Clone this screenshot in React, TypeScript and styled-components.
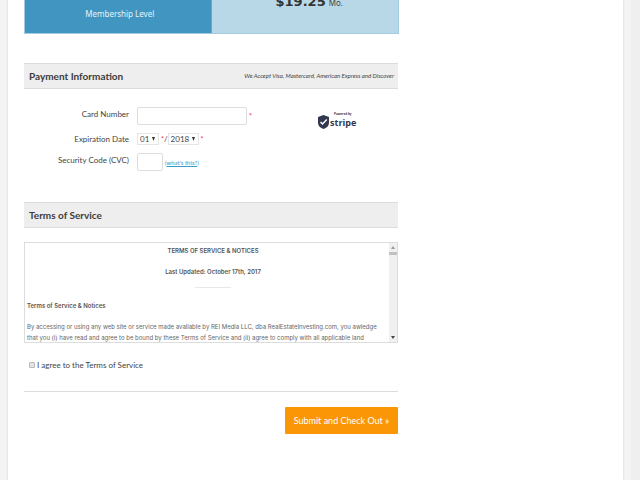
import React from "react";
import styled, { createGlobalStyle } from "styled-components";

const GlobalStyle = createGlobalStyle`
  * { box-sizing: border-box; }
  html { background: #f4f4f4; }
  body {
    margin: 0;
    font-family: Lato, "Liberation Sans", sans-serif;
    font-size: 8px;
    color: #444;
  }
`;

const Page = styled.div`
  display: flex;
  min-height: 100vh;
  padding-left: 8px;
`;

const Sheet = styled.main`
  flex: 1;
  padding: 0 16px 46px;
  background: #fff;
  box-shadow: 0 0 2px #ccc;
`;

const PageTrack = styled.div`
  width: 9px;
  margin-left: 8px;
  background: #efefef;
`;

const Form = styled.form`
  width: 65%;
  max-width: 374px;
`;

const Summary = styled.div`
  display: grid;
  grid-template-columns: 1fr 1fr;
  height: 34px;
  margin-right: -1px;
  border: 1px solid #a3cce0;
  border-top: 0;
  overflow: hidden;
`;

const Level = styled.div`
  padding: 8px 0 0 4px;
  border-right: 1px solid #66a9cb;
  background: #4196c1;
  color: #e6f2f8;
  font: 8px/12px "Noto Sans", sans-serif;
  text-align: center;
`;

const Price = styled.div`
  display: flex;
  align-items: baseline;
  justify-content: center;
  gap: 3px;
  margin-top: -8px;
  padding-left: 9px;
  background: #b8d8e7;
  color: #444;
  font: 8px/20px "Noto Sans", sans-serif;

  strong {
    color: #333;
    font: 700 13px/20px "DejaVu Sans", sans-serif;
  }
`;

const SectionHeader = styled.header<{ $gap: number }>`
  display: flex;
  align-items: center;
  justify-content: space-between;
  height: 26px;
  margin-top: ${(p) => p.$gap}px;
  padding: 0 4px 0 5px;
  border: 1px solid #dcdcdc;
  border-width: 1px 0;
  background: #eee;

  h2 {
    margin: 0;
    font-size: 10px;
    line-height: 14px;
    color: #3c3c3c;
  }

  em {
    font-size: 6px;
    line-height: 8px;
  }
`;

const Payment = styled.div`
  display: grid;
  grid-template-columns: 1fr 80px;
  height: 64px;
  margin-top: 17px;
`;

const Fields = styled.div`
  display: flex;
  flex-direction: column;
`;

const Field = styled.div<{ $height: number }>`
  display: flex;
  align-items: flex-start;
  height: ${(p) => p.$height}px;
`;

const Label = styled.label`
  width: 105px;
  margin-right: 8px;
  padding-top: 3px;
  font-size: 8px;
  line-height: 10px;
  text-align: right;
`;

const TextInput = styled.input<{ $width: number }>`
  width: ${(p) => p.$width}px;
  height: 18px;
  margin: 1px 0 0;
  padding: 2px;
  border: 1px solid #ddd;
  border-radius: 2px;
  font: 8px Lato, sans-serif;
`;

const Select = styled.select<{ $width: number }>`
  width: ${(p) => p.$width}px;
  height: 12px;
  padding: 0 2px;
  border: 1px solid #e5e5e5;
  border-radius: 0;
  appearance: none;
  background: #fff;
  color: #444;
  font: 8px/10px Lato, sans-serif;
`;

const SelectBox = styled.span`
  display: inline-grid;
  align-items: center;

  > * { grid-area: 1 / 1; }
  svg {
    justify-self: end;
    width: 3px;
    height: 4px;
    margin-right: 4px;
    pointer-events: none;
  }
`;

const Required = styled.span`
  margin-left: 2px;
  color: #e33;
  font-size: 7px;
  line-height: 12px;
`;

const CardRequired = styled(Required)`
  line-height: 20px;
`;

const DateParts = styled.div`
  display: flex;
  margin-top: 2px;
  font-size: 8px;
  line-height: 12px;
`;

const Help = styled.span`
  margin: 7px 0 0 2px;
  font-size: 6px;
  line-height: 8px;
  color: #3a9bc8;

  a { color: inherit; }
`;

const Stripe = styled.div`
  display: flex;
  align-items: flex-end;
  gap: 1px;
  height: 23px;
  color: #32384e;

  svg { width: 11px; height: 14px; }
`;

const StripeName = styled.div`
  display: flex;
  flex-direction: column;
  font-family: "Open Sans", sans-serif;

  small {
    padding-left: 4px;
    font-size: 3px;
    line-height: 4px;
    font-weight: 700;
  }
  strong {
    font-size: 9px;
    line-height: 13px;
  }
`;

const TermsBox = styled.div`
  display: flex;
  height: 101px;
  margin-top: 14px;
  border: 1px solid #ddd;
`;

const TermsText = styled.div`
  flex: 1;
  padding: 2px 2px 0;
  overflow: hidden;
  color: #666;
  font: 6px/11px Inter, Roboto, sans-serif;

  p { margin: 0 0 10px; white-space: nowrap; }
`;

const TermsTitle = styled.div`
  padding-left: 12px;
  text-align: center;

  hr {
    width: 36px;
    margin: 0 auto 12px;
    border: 0;
    border-top: 1px solid #e8e8e8;
  }
`;

const Heading = styled.p`
  font-weight: 600;
  color: #555;
`;

const Track = styled.div`
  display: flex;
  flex-direction: column;
  align-items: center;
  width: 8px;
  background: #f0f0f0;

  svg { width: 4px; height: 3px; margin: 3px 0; }
`;

const Thumb = styled.div`
  width: 8px;
  height: 3px;
  margin-bottom: auto;
  background: #c1c1c1;
`;

const Agree = styled.label`
  display: flex;
  align-items: center;
  gap: 2px;
  margin-top: 17px;
  padding-left: 5px;
  font-size: 8px;
  line-height: 10px;

  input {
    appearance: none;
    width: 6px;
    height: 6px;
    margin: 0;
    border: 1px solid #b8b8b8;
    border-radius: 1px;
    background: #e4e4e4;
  }
`;

const Actions = styled.div`
  display: flex;
  justify-content: flex-end;
  margin-top: 21px;
  padding-top: 15px;
  border-top: 1px solid #ddd;
`;

const Submit = styled.button`
  height: 27px;
  padding: 0 9px;
  border: 0;
  border-radius: 1px;
  background: #fb9706;
  color: #fff;
  font: 9px/12px Lato, sans-serif;
`;

function Drop({ label, width, value }: { label: string; width: number; value: string }) {
  return (
    <SelectBox>
      <Select $width={width} aria-label={label} defaultValue={value}>
        <option>{value}</option>
      </Select>
      <svg viewBox="0 0 3 4"><path d="M0 0h3L1.5 4z" fill="#333" /></svg>
    </SelectBox>
  );
}

export default function App() {
  return (
    <>
      <GlobalStyle />
      <Page>
        <Sheet>
          <Form onSubmit={(e) => e.preventDefault()}>
            <Summary>
              <Level>Membership Level</Level>
              <Price><strong>$19.25</strong><span>Mo.</span></Price>
            </Summary>

            <SectionHeader $gap={29}>
              <h2>Payment Information</h2>
              <em>We Accept Visa, Mastercard, American Express and Discover</em>
            </SectionHeader>
            <Payment>
              <Fields>
                <Field $height={25}>
                  <Label htmlFor="card">Card Number</Label>
                  <TextInput id="card" $width={110} />
                  <CardRequired>*</CardRequired>
                </Field>
                <Field $height={21}>
                  <Label as="span">Expiration Date</Label>
                  <DateParts>
                    <Drop label="Expiration month" width={22} value="01" />
                    <Required>*</Required>/
                    <Drop label="Expiration year" width={31} value="2018" />
                    <Required>*</Required>
                  </DateParts>
                </Field>
                <Field $height={18}>
                  <Label htmlFor="cvc">Security Code (CVC)</Label>
                  <TextInput id="cvc" $width={26} />
                  <Help>(<a href="#cvc">what's this?</a>)</Help>
                </Field>
              </Fields>
              <Stripe>
                <svg viewBox="0 0 11 14">
                  <path d="M5.5 0 11 2v6c0 3-2.3 4.8-5.5 6C2.3 12.800 0 11 0 8V2z" fill="currentColor" />
                  <path d="m2.500 7 2 2L8.800 4.500" fill="none" stroke="#fff" strokeWidth="1.400" />
                </svg>
                <StripeName><small>Powered by</small><strong>stripe</strong></StripeName>
              </Stripe>
            </Payment>

            <SectionHeader $gap={32}><h2>Terms of Service</h2></SectionHeader>
            <TermsBox>
              <TermsText>
                <TermsTitle>
                  <Heading>TERMS OF SERVICE &amp; NOTICES</Heading>
                  <Heading>Last Updated: October 17th, 2017</Heading>
                  <hr />
                </TermsTitle>
                <Heading>Terms of Service &amp; Notices</Heading>
                <p>
                  By accessing or using any web site or service made available by REI Media LLC, dba RealEstateInvesting.com, you awledge<br />
                  that you (i) have read and agree to be bound by these Terms of Service and (ii) agree to comply with all applicable land
                </p>
              </TermsText>
              <Track>
                <svg viewBox="0 0 4 3"><path d="M0 3h4L2 0z" fill="#999" /></svg>
                <Thumb />
                <svg viewBox="0 0 4 3"><path d="M0 0h4L2 3z" fill="#444" /></svg>
              </Track>
            </TermsBox>

            <Agree><input type="checkbox" />I agree to the Terms of Service</Agree>
            <Actions><Submit type="submit">Submit and Check Out »</Submit></Actions>
          </Form>
        </Sheet>
        <PageTrack />
      </Page>
    </>
  );
}
